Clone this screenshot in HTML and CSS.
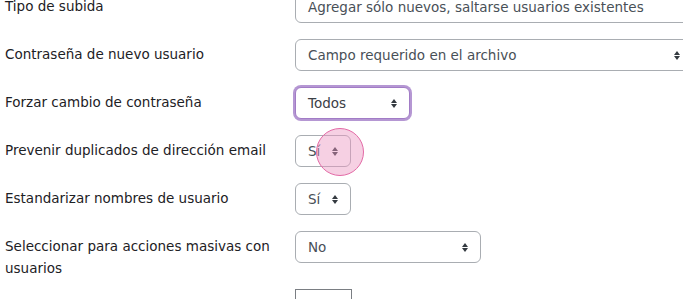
FILE: index.html
```html
<!DOCTYPE html>
<html lang="es">
<head>
  <meta charset="UTF-8">
  <title>Subir usuarios</title>
  <link rel="stylesheet" href="styles.css">
</head>
<body>

<form class="settings">
  <div class="row">
    <label class="lbl">Tipo de subida</label>
    <div class="ctl">
      <div class="sel widest">Agregar sólo nuevos, saltarse usuarios existentes<span class="caret"></span></div>
    </div>
  </div>
  <div class="row">
    <label class="lbl">Contraseña de nuevo usuario</label>
    <div class="ctl">
      <div class="sel wide">Campo requerido en el archivo<span class="caret"></span></div>
    </div>
  </div>
  <div class="row">
    <label class="lbl">Forzar cambio de contraseña</label>
    <div class="ctl">
      <div class="sel todos focus">Todos<span class="caret"></span></div>
    </div>
  </div>
  <div class="row">
    <label class="lbl">Prevenir duplicados de dirección email</label>
    <div class="ctl">
      <div class="sel tiny">Sí<span class="caret"></span></div>
      <span class="tap"></span>
    </div>
  </div>
  <div class="row">
    <label class="lbl">Estandarizar nombres de usuario</label>
    <div class="ctl">
      <div class="sel tiny">Sí<span class="caret"></span></div>
    </div>
  </div>
  <div class="row tall">
    <label class="lbl">Seleccionar para acciones masivas con usuarios</label>
    <div class="ctl">
      <div class="sel mid">No<span class="caret"></span></div>
    </div>
  </div>
  <div class="row">
    <label class="lbl"></label>
    <div class="ctl">
      <div class="plain">No</div>
    </div>
  </div>
</form>

</body>
</html>
```

FILE: styles.css
```css
body {
  margin: 0;
  background: #fff;
  overflow: hidden;
  font-family: "DejaVu Sans", sans-serif;
  font-size: 13.5px;
  color: #1d2125;
}

.settings {
  margin-top: -9px;
  padding-left: 5px;
}

.row {
  display: flex;
  align-items: flex-start;
  margin-bottom: 16px;
}
.row.tall {
  margin-bottom: 10px;
}

.lbl {
  width: 290px;
  flex: none;
  padding-top: 4px;
  padding-right: 20px;
  box-sizing: border-box;
  line-height: 22px;
}

.ctl {
  position: relative;
  flex: none;
}

.sel {
  position: relative;
  height: 32px;
  box-sizing: border-box;
  border: 1px solid #a9adb2;
  border-radius: 6px;
  padding: 0 30px 0 12px;
  line-height: 30px;
  color: #495057;
  white-space: nowrap;
  background: #fff;
}
.sel.widest { width: 430px; }
.sel.wide { width: 398px; }
.sel.todos { width: 115px; }
.sel.tiny { width: 56px; }
.sel.mid { width: 186px; }

.sel.focus {
  border-color: #a27cc6;
  box-shadow: 0 0 0 2px #b597d3;
  color: #3b4046;
}

.caret {
  position: absolute;
  right: 12px;
  top: 11px;
  width: 6px;
  height: 9px;
}
.caret::before,
.caret::after {
  content: "";
  position: absolute;
  left: 0;
  border-left: 3px solid transparent;
  border-right: 3px solid transparent;
}
.caret::before {
  top: 0;
  border-bottom: 4px solid #343a40;
}
.caret::after {
  bottom: 0;
  border-top: 4px solid #343a40;
}

.tap {
  position: absolute;
  left: 21px;
  top: -7px;
  width: 46px;
  height: 46px;
  border-radius: 50%;
  background: rgba(236, 150, 192, 0.45);
  border: 1px solid #e36aa6;
}

.plain {
  width: 57px;
  height: 32px;
  box-sizing: border-box;
  border: 1px solid #7a7e83;
  border-bottom: none;
  padding: 6px 12px;
  color: #d4d6d8;
}
```
